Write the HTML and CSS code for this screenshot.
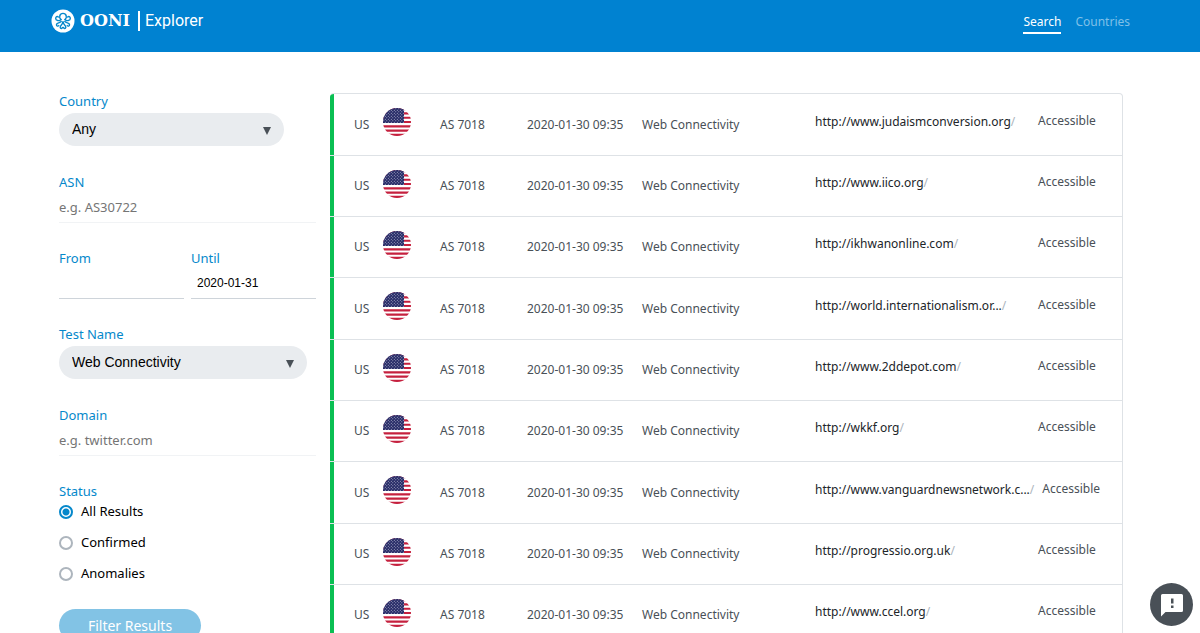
FILE: index.html
```
<!DOCTYPE html>
<html lang="en">
<head>
  <meta charset="UTF-8" />
  <meta name="viewport" content="width=device-width, initial-scale=1" />
  <title>OONI Explorer</title>
  <link rel="stylesheet" href="styles.css">
</head>
<body>
  <!-- octopus and flag drawings, reused below -->
  <svg class="sprites" aria-hidden="true">
    <defs>
      <clipPath id="round"><circle cx="14" cy="14" r="14" /></clipPath>
      <pattern id="stars" width="3" height="3" patternUnits="userSpaceOnUse">
        <circle cx=".8" cy=".8" r=".5" fill="#c3c5dc" />
        <circle cx="2.3" cy="2.3" r=".5" fill="#c3c5dc" />
      </pattern>
    </defs>
    <symbol id="octopus" viewBox="0 0 24 24">
      <circle cx="12" cy="12" r="11.5" fill="#fff" />
      <g fill="none" stroke="#0588cb" stroke-width="1.4" stroke-linecap="round">
        <path d="M10 10.500C7.500 8.500 8.600 4.400 12 4.400s4.500 4.100 2 6.100" />
        <path d="M10 10.500c-1.600 1.900-5.300 1.200-5.300-1.100 0-1.700 1.600-2.400 2.600-1.400" />
        <path d="M14 10.500c1.600 1.900 5.300 1.200 5.300-1.100 0-1.700-1.600-2.400-2.600-1.400" />
        <path d="M10.200 12.500c-1.700 1.800-4.200.9-4.700 3-.3 1.600 1.600 2.200 2.300 1" />
        <path d="M13.800 12.500c1.700 1.800 4.200.9 4.700 3 .3 1.600-1.600 2.200-2.300 1" />
        <path d="M11.700 13c.3 2.800-2.700 3.200-2.500 5.300.2 1.500 2.100 1.500 2.200.2" />
        <path d="M12.300 13c-.3 2.800 2.700 3.200 2.500 5.300-.2 1.500-2.100 1.500-2.200.2" />
      </g>
    </symbol>
    <symbol id="flag-us" viewBox="0 0 28 28">
      <g clip-path="url(#round)">
        <path fill="#fff" d="M0 0h28v28H0z" />
        <path stroke="#c5203e" stroke-width="2.15" d="M0 1.080h28M0 5.390h28M0 9.700h28M0 14h28M0 18.300h28M0 22.610h28M0 26.920h28" />
        <path fill="#262a66" d="M0 0h21v15.100H0z" />
        <path fill="url(#stars)" d="M0 0h21v15.100H0z" />
      </g>
    </symbol>
  </svg>

  <!-- top bar -->
  <header class="navbar">
    <a class="brand" href="#">
      <svg class="brand-icon" aria-hidden="true"><use href="#octopus" /></svg>
      <span class="brand-name">OONI</span>
      <span class="brand-product">Explorer</span>
    </a>
    <nav class="nav-links">
      <a class="nav-link active" href="#">Search</a>
      <a class="nav-link" href="#">Countries</a>
    </nav>
  </header>

  <main class="page">
    <!-- search filters -->
    <form class="filters">
      <div class="field">
        <label class="field-label" for="country">Country</label>
        <div class="select-box country-box">
          <select class="select" id="country">
            <option>Any</option>
          </select>
          <svg class="select-arrow" viewBox="0 0 10 8" aria-hidden="true"><path d="M1 0h8L5 8z" /></svg>
        </div>
      </div>

      <div class="field">
        <label class="field-label" for="asn">ASN</label>
        <input class="text-input" id="asn" type="text" placeholder="e.g. AS30722">
      </div>

      <div class="date-row">
        <div class="field">
          <label class="field-label" for="since">From</label>
          <input class="text-input date-input" id="since" type="text">
        </div>
        <div class="field">
          <label class="field-label" for="until">Until</label>
          <input class="text-input date-input" id="until" type="text" value="2020-01-31">
        </div>
      </div>

      <div class="field">
        <label class="field-label" for="test-name">Test Name</label>
        <div class="select-box test-box">
          <select class="select" id="test-name">
            <option>Web Connectivity</option>
          </select>
          <svg class="select-arrow" viewBox="0 0 10 8" aria-hidden="true"><path d="M1 0h8L5 8z" /></svg>
        </div>
      </div>

      <div class="field">
        <label class="field-label" for="domain">Domain</label>
        <input class="text-input" id="domain" type="text" placeholder="e.g. twitter.com">
      </div>

      <fieldset class="status">
        <legend class="field-label">Status</legend>
        <div class="radio-list">
          <label class="radio-label"><input class="radio" type="radio" name="status" checked>All Results</label>
          <label class="radio-label"><input class="radio" type="radio" name="status">Confirmed</label>
          <label class="radio-label"><input class="radio" type="radio" name="status">Anomalies</label>
        </div>
      </fieldset>

      <button class="filter-button" type="button">Filter Results</button>
    </form>

    <!-- measurement results -->
    <ul class="results">
      <li class="result">
        <div class="country">US <svg class="flag" aria-hidden="true"><use href="#flag-us" /></svg></div>
        <div class="asn">AS 7018</div>
        <div class="date">2020-01-30 09:35</div>
        <div class="test">Web Connectivity</div>
        <div class="url">http://www.judaismconversion.org<span class="path">/</span></div>
        <div class="outcome">Accessible</div>
      </li>
      <li class="result">
        <div class="country">US <svg class="flag" aria-hidden="true"><use href="#flag-us" /></svg></div>
        <div class="asn">AS 7018</div>
        <div class="date">2020-01-30 09:35</div>
        <div class="test">Web Connectivity</div>
        <div class="url">http://www.iico.org<span class="path">/</span></div>
        <div class="outcome">Accessible</div>
      </li>
      <li class="result">
        <div class="country">US <svg class="flag" aria-hidden="true"><use href="#flag-us" /></svg></div>
        <div class="asn">AS 7018</div>
        <div class="date">2020-01-30 09:35</div>
        <div class="test">Web Connectivity</div>
        <div class="url">http://ikhwanonline.com<span class="path">/</span></div>
        <div class="outcome">Accessible</div>
      </li>
      <li class="result">
        <div class="country">US <svg class="flag" aria-hidden="true"><use href="#flag-us" /></svg></div>
        <div class="asn">AS 7018</div>
        <div class="date">2020-01-30 09:35</div>
        <div class="test">Web Connectivity</div>
        <div class="url">http://world.internationalism.or...<span class="path">/</span></div>
        <div class="outcome">Accessible</div>
      </li>
      <li class="result">
        <div class="country">US <svg class="flag" aria-hidden="true"><use href="#flag-us" /></svg></div>
        <div class="asn">AS 7018</div>
        <div class="date">2020-01-30 09:35</div>
        <div class="test">Web Connectivity</div>
        <div class="url">http://www.2ddepot.com<span class="path">/</span></div>
        <div class="outcome">Accessible</div>
      </li>
      <li class="result">
        <div class="country">US <svg class="flag" aria-hidden="true"><use href="#flag-us" /></svg></div>
        <div class="asn">AS 7018</div>
        <div class="date">2020-01-30 09:35</div>
        <div class="test">Web Connectivity</div>
        <div class="url">http://wkkf.org<span class="path">/</span></div>
        <div class="outcome">Accessible</div>
      </li>
      <li class="result">
        <div class="country">US <svg class="flag" aria-hidden="true"><use href="#flag-us" /></svg></div>
        <div class="asn">AS 7018</div>
        <div class="date">2020-01-30 09:35</div>
        <div class="test">Web Connectivity</div>
        <div class="url">http://www.vanguardnewsnetwork.c...<span class="path">/</span></div>
        <div class="outcome">Accessible</div>
      </li>
      <li class="result">
        <div class="country">US <svg class="flag" aria-hidden="true"><use href="#flag-us" /></svg></div>
        <div class="asn">AS 7018</div>
        <div class="date">2020-01-30 09:35</div>
        <div class="test">Web Connectivity</div>
        <div class="url">http://progressio.org.uk<span class="path">/</span></div>
        <div class="outcome">Accessible</div>
      </li>
      <li class="result">
        <div class="country">US <svg class="flag" aria-hidden="true"><use href="#flag-us" /></svg></div>
        <div class="asn">AS 7018</div>
        <div class="date">2020-01-30 09:35</div>
        <div class="test">Web Connectivity</div>
        <div class="url">http://www.ccel.org<span class="path">/</span></div>
        <div class="outcome">Accessible</div>
      </li>
    </ul>
  </main>

  <!-- feedback button -->
  <button class="feedback" type="button" aria-label="Feedback">
    <svg class="feedback-icon" viewBox="0 0 24 24" aria-hidden="true">
      <path fill="#fff" fill-rule="evenodd" d="M2.500 1h19A1.500 1.500 0 0 1 23 2.500v15a1.500 1.500 0 0 1-1.500 1.500H5.500L1 23.500v-21A1.500 1.500 0 0 1 2.500 1zM11 5.500v5h2.500v-5zM11 12.500V15h2.500v-2.500z" />
    </svg>
  </button>
</body>
</html>
```

FILE: styles.css
```
* {
  box-sizing: border-box;
}

body {
  margin: 0;
  background-color: #fff;
  color: #000;
  font-family: "Noto Sans", sans-serif;
  font-size: 13px;
  line-height: 20px;
}

.sprites {
  position: absolute;
  width: 0;
  height: 0;
}

/* top bar */
.navbar {
  display: flex;
  justify-content: space-between;
  align-items: center;
  height: 52px;
  padding: 0 70px 10px 51px;
  background-color: #0082d1;
}

.brand {
  display: flex;
  align-items: center;
  color: #fff;
  text-decoration: none;
}

.brand-icon {
  width: 24px;
  height: 24px;
  margin-right: 5px;
}

.brand-name {
  font-family: "DejaVu Serif", serif;
  font-size: 16px;
  font-weight: bold;
}

.brand-product {
  margin-left: 8px;
  padding-left: 5px;
  border-left: 2px solid #fff;
  font-family: Roboto, sans-serif;
  font-size: 16px;
}

.nav-links {
  display: flex;
  gap: 14px;
  font-size: 12px;
}

.nav-link {
  padding-top: 3px;
  border-bottom: 2px solid transparent;
  color: #7fc0e8;
  text-decoration: none;
}

.nav-link.active {
  border-color: #fff;
  color: #fff;
}

/* page layout */
.page {
  display: flex;
  align-items: flex-start;
  gap: 14px;
  padding: 39px 77px 20px 59px;
}

/* filters */
.filters {
  display: flex;
  flex: 0 0 257px;
  flex-direction: column;
  gap: 25px;
}

.field {
  display: flex;
  flex: 1;
  flex-direction: column;
  min-width: 0;
}

.field-label {
  padding: 0;
  color: #0588cb;
}

.select-box {
  position: relative;
  margin: 2px 0 1px;
}

.country-box {
  width: 225px;
}

.test-box {
  width: 248px;
}

.select {
  width: 100%;
  height: 33px;
  padding: 0 32px 1px 13px;
  border: none;
  border-radius: 17px;
  background-color: #e9ecef;
  color: #000;
  font-family: "Liberation Sans", sans-serif;
  font-size: 14px;
  appearance: none;
}

.select-arrow {
  position: absolute;
  top: 14px;
  right: 12px;
  width: 10px;
  height: 8px;
  fill: #495057;
  pointer-events: none;
}

.text-input {
  width: 100%;
  height: 31px;
  padding: 0;
  border: none;
  border-bottom: 1px solid #f1f3f5;
  background: none;
  font-family: inherit;
  font-size: 13px;
}

.text-input::placeholder {
  color: #757575;
}

.date-row {
  display: flex;
  gap: 7px;
}

.date-input {
  padding: 0 6px;
  border-color: #ced4da;
  font-family: "Liberation Sans", sans-serif;
  font-size: 12px;
}

.status {
  margin: 0;
  padding: 0;
  border: none;
}

.radio-list {
  display: flex;
  flex-direction: column;
  align-items: flex-start;
  gap: 10px;
}

.radio-label {
  display: flex;
  align-items: center;
  line-height: 21px;
}

.radio {
  width: 14px;
  height: 14px;
  margin: 0 8px 0 0;
  border: 2px solid #adb5bd;
  border-radius: 50%;
  appearance: none;
}

.radio:checked {
  border-color: #0588cb;
  background: radial-gradient(circle, #0588cb 3px, #fff 4px);
}

.filter-button {
  align-self: flex-start;
  width: 142px;
  height: 33px;
  padding: 0 0 1px;
  border: none;
  border-radius: 17px;
  background-color: #82c3e5;
  color: #fff;
  font-family: inherit;
  font-size: 14px;
}

/* results */
.results {
  flex: 1;
  margin: 2px 0 0;
  padding: 0;
  overflow: hidden;
  border: 1px solid #dee2e6;
  border-left: none;
  border-radius: 4px;
  color: #495057;
  font-size: 12px;
  list-style: none;
}

.result {
  display: flex;
  align-items: center;
  height: 61px;
  border-bottom: 1px solid #dee2e6;
  white-space: nowrap;
}

.result:nth-child(3n + 1) {
  height: 62px;
}

/* green bar marks an accessible site */
.result::before {
  content: "";
  align-self: stretch;
  width: 4px;
  margin-right: 20px;
  background-color: #0abf53;
}

.country {
  display: flex;
  align-items: center;
  width: 86px;
}

.flag {
  width: 28px;
  height: 28px;
  margin: 0 0 5px 14px;
}

.asn {
  width: 87px;
}

.date {
  width: 115px;
}

.test {
  width: 173px;
}

.url {
  min-width: 223px;
  padding: 0 8px 6px 0;
  color: #212529;
}

.path {
  color: #adb5bd;
}

.outcome {
  padding-bottom: 8px;
}

/* feedback */
.feedback {
  position: fixed;
  right: 7px;
  bottom: 7px;
  display: flex;
  align-items: center;
  justify-content: center;
  width: 43px;
  height: 43px;
  padding: 0;
  border: none;
  border-radius: 50%;
  background-color: #495057;
}

.feedback-icon {
  width: 24px;
  height: 24px;
}
```
